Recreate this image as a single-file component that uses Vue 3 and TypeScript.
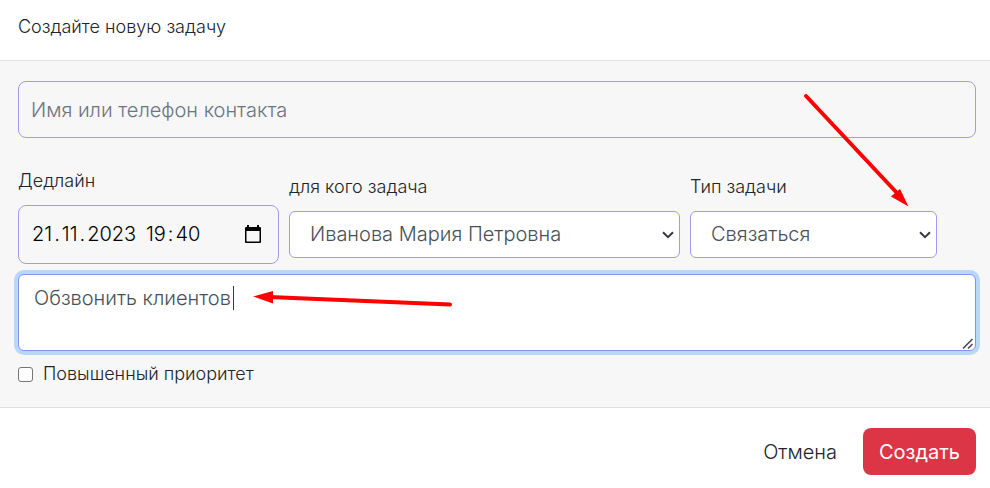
<script setup lang="ts">
import { reactive, ref } from 'vue'

interface DatePart {
  id: string
  name: string
  value: string
  after: string
}

const contact = ref('')
const deadline = reactive<DatePart[]>([
  { id: 'deadline', name: 'День', value: '21', after: '.' },
  { id: 'deadline-month', name: 'Месяц', value: '11', after: '.' },
  { id: 'deadline-year', name: 'Год', value: '2023', after: ' ' },
  { id: 'deadline-hour', name: 'Часы', value: '19', after: ':' },
  { id: 'deadline-minute', name: 'Минуты', value: '40', after: '' },
])
const assignees: string[] = ['Иванова Мария Петровна']
const assignee = ref(assignees[0])
const taskTypes: string[] = ['Связаться']
const taskType = ref(taskTypes[0])
const description = ref('Обзвонить клиентов')
const highPriority = ref(false)
</script>

<template>
  <form class="dialog" @submit.prevent>
    <header class="head">
      <h1 class="title">Создайте новую задачу</h1>
    </header>

    <main class="body">
      <input
        v-model="contact"
        class="control contact"
        type="text"
        placeholder="Имя или телефон контакта"
        aria-label="Имя или телефон контакта"
      />

      <div class="fields">
        <div class="field">
          <label for="deadline">Дедлайн</label>
          <div class="control date">
            <div class="date-parts">
              <template v-for="part in deadline" :key="part.id">
                <input
                  :id="part.id"
                  v-model="part.value"
                  class="date-input"
                  type="text"
                  inputmode="numeric"
                  :aria-label="part.name"
                />
                <span v-if="part.after" class="date-mark">{{ part.after }}</span>
              </template>
            </div>
            <button class="date-button" type="button" aria-label="Открыть календарь">
              <svg width="16" height="18" viewBox="0 0 16 18">
                <path
                  fill="#000"
                  fill-rule="evenodd"
                  d="M2 0H4V2H12V0H14V2H15Q16 2 16 3V17Q16 18 15 18H1Q0 18 0 17V3Q0 2 1 2H2ZM1.500 6V16.500H14.500V6Z"
                />
              </svg>
            </button>
          </div>
        </div>

        <div class="field">
          <label for="assignee">для кого задача</label>
          <div class="select-wrap">
            <select id="assignee" v-model="assignee" class="control select">
              <option v-for="name in assignees" :key="name" :value="name">{{ name }}</option>
            </select>
            <svg class="chevron" width="12" height="8" viewBox="0 0 12 8">
              <path d="M1 1.200L6 6.200L11 1.200" fill="none" stroke="#343a40" stroke-width="2" />
            </svg>
          </div>
        </div>

        <div class="field">
          <label for="type">Тип задачи</label>
          <div class="select-wrap">
            <select id="type" v-model="taskType" class="control select">
              <option v-for="name in taskTypes" :key="name" :value="name">{{ name }}</option>
            </select>
            <svg class="chevron" width="12" height="8" viewBox="0 0 12 8">
              <path d="M1 1.200L6 6.200L11 1.200" fill="none" stroke="#343a40" stroke-width="2" />
            </svg>
            <svg class="arrow arrow-type" width="106" height="116" viewBox="0 0 106 116">
              <path d="M3 3L94 100" stroke="#f00" stroke-width="4" stroke-linecap="round" />
              <path d="M105.500 113.500L88 103.500L92 100L97 96Z" fill="#f00" />
            </svg>
          </div>
        </div>
      </div>

      <div class="text-wrap">
        <textarea v-model="description" class="control text" aria-label="Описание задачи"></textarea>
        <span class="caret"></span>
        <svg class="grip" width="12" height="12" viewBox="0 0 12 12">
          <path d="M1 10.500L10.500 1M6 10.500L10.500 6" stroke="#444" stroke-width="1.500" />
        </svg>
        <svg class="arrow arrow-text" width="200" height="20" viewBox="0 0 200 20">
          <path d="M16 6L197 13.500" stroke="#f00" stroke-width="4" stroke-linecap="round" />
          <path d="M0 5.500L20 0V12.500Z" fill="#f00" />
        </svg>
      </div>

      <label class="priority">
        <input v-model="highPriority" class="check" type="checkbox" />
        Повышенный приоритет
      </label>
    </main>

    <footer class="foot">
      <button class="button cancel" type="button">Отмена</button>
      <button class="button create" type="submit">Создать</button>
    </footer>
  </form>
</template>

<style>
body {
  background: #fff;
}
</style>

<style scoped>
.dialog {
  color: #212529;
  font-family: Inter, 'Liberation Sans', sans-serif;
  font-size: 18px;
  font-weight: 300;
  line-height: 24px;
}

.dialog *,
.dialog {
  box-sizing: border-box;
}

.head {
  padding: 15px 18px 21px;
  border-bottom: 1px solid #dee2e6;
}

.title {
  margin: 0;
  font-size: 18px;
  font-weight: 300;
}

.body {
  display: flex;
  flex-direction: column;
  padding: 20px 14px 21px 18px;
  background: #f7f7f7;
  border-bottom: 1px solid #dee2e6;
}

input,
select,
textarea,
button {
  margin: 0;
  font: inherit;
}

.control {
  width: 100%;
  border: 1px solid #a399f2;
  border-radius: 6px;
  outline: none;
  font-size: 20px;
}

.contact {
  height: 57px;
  padding: 0 12px;
  border-radius: 8px;
  background: transparent;
}

.contact::placeholder {
  color: #6c757d;
  opacity: 1;
}

.fields {
  display: grid;
  grid-template-columns: 261fr 391fr 247fr;
  gap: 10px;
  align-items: center;
  margin-top: 31px;
  padding-right: 39px;
}

.field {
  display: flex;
  flex-direction: column;
  gap: 12px;
  min-width: 0;
}

.date {
  display: flex;
  align-items: center;
  justify-content: space-between;
  height: 59px;
  padding: 0 17px 2px 13px;
  border-radius: 8px;
}

.date-parts {
  display: flex;
  gap: 2px;
  color: #000;
}

.date-input {
  field-sizing: content;
  padding: 0;
  border: 0;
  outline: none;
  background: transparent;
  color: inherit;
}

.date-mark {
  white-space: pre;
}

.date-button {
  display: flex;
  padding: 0;
  border: 0;
  background: transparent;
}

.select-wrap,
.text-wrap {
  position: relative;
}

.select {
  display: block;
  height: 47px;
  padding: 0 32px 2px 20px;
  appearance: none;
  background: #fff;
  color: #495057;
}

.chevron {
  position: absolute;
  top: 20px;
  right: 6px;
  pointer-events: none;
}

.text-wrap {
  margin-top: 10px;
}

.text {
  display: block;
  height: 77px;
  padding: 8px 15px;
  border-color: #8590f0;
  background: #fff;
  box-shadow: 0 0 0 4px #b8d8f9;
  color: #495057;
  line-height: 30px;
  resize: none;
}

.caret {
  position: absolute;
  top: 12px;
  left: 215px;
  width: 1px;
  height: 24px;
  background: #343a40;
}

.grip {
  position: absolute;
  right: 2px;
  bottom: 1px;
}

.arrow {
  position: absolute;
  fill: none;
  pointer-events: none;
}

.arrow-type {
  top: -118px;
  right: 28px;
}

.arrow-text {
  top: 17px;
  left: 235px;
}

.priority {
  display: flex;
  align-items: center;
  align-self: flex-start;
  gap: 10px;
  margin-top: 11px;
}

.check {
  width: 15px;
  height: 15px;
  border: 1px solid #767676;
  border-radius: 3px;
  appearance: none;
  background: #fff;
}

.check:checked {
  background: #dc3545;
}

.foot {
  display: flex;
  justify-content: flex-end;
  gap: 10px;
  padding: 20px 14px 13px;
}

.button {
  height: 47px;
  padding: 0 16px;
  border: 0;
  border-radius: 8px;
  font-size: 20px;
}

.cancel {
  background: transparent;
  color: #212529;
}

.create {
  background: #dc3545;
  color: #fff;
  font-weight: 400;
}
</style>
